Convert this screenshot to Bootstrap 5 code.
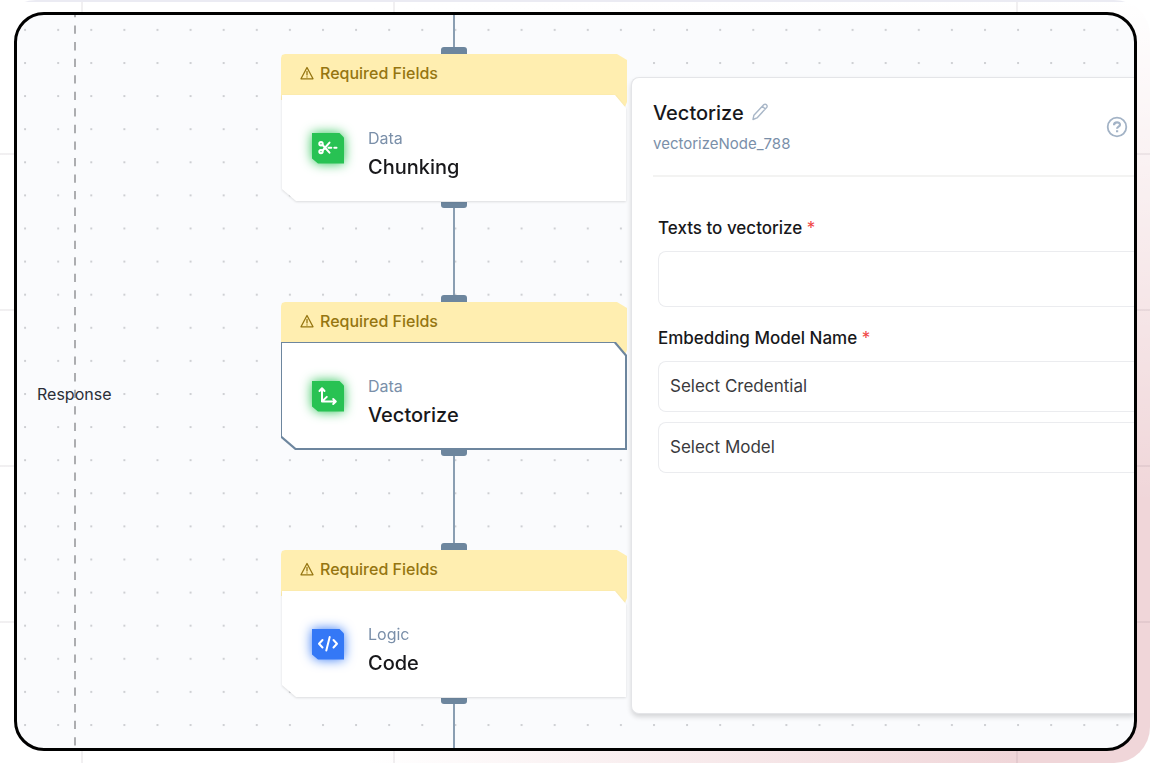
<!DOCTYPE html>
<html lang="en">
<head>
<meta charset="utf-8">
<meta name="viewport" content="width=device-width, initial-scale=1">
<title>Workflow editor</title>
<link href="https://cdn.jsdelivr.net/npm/bootstrap@5.3.0/dist/css/bootstrap.min.css" rel="stylesheet">
<style>
  body { font-family: Inter, "Liberation Sans", sans-serif; color: #18181b; background: #fff; }
  .backdrop {
    padding: 12px 14px 13px;
    position: relative;
    isolation: isolate;
  }
  .backdrop::before {
    content: ""; position: absolute; inset: 0 1px 1px 0; z-index: -2; border-radius: 36px;
    background:
      linear-gradient(#ebebf3 0 0) 0 0 / 100% 2px no-repeat,
      linear-gradient(to bottom, #fff 0, rgba(255,255,255,0) 66%),
      linear-gradient(to right, #fff 32%, #f0d6d9 88%);
  }
  .backdrop::after {
    content: ""; position: absolute; inset: 2px 1px 1px 0; z-index: -1;
    background:
      linear-gradient(rgba(60,40,60,.07) 0 0) 81px 0 / 2px 100% no-repeat,
      linear-gradient(rgba(60,40,60,.07) 0 0) 393px 0 / 2px 100% no-repeat,
      linear-gradient(rgba(60,40,60,.07) 0 0) 1016px 0 / 2px 100% no-repeat,
      linear-gradient(rgba(60,40,60,.07) 0 0) 0 151px / 100% 2px no-repeat,
      linear-gradient(rgba(60,40,60,.07) 0 0) 0 307px / 100% 2px no-repeat,
      linear-gradient(rgba(60,40,60,.07) 0 0) 0 463px / 100% 2px no-repeat,
      linear-gradient(rgba(60,40,60,.07) 0 0) 0 619px / 100% 2px no-repeat;
  }
  .editor { border: 3px solid #000; border-radius: 30px; background: #fafbfd; overflow: hidden; }
  .editor-grid { inset: 0; z-index: 0; }
  .lane { width: 264px; flex: none; z-index: 1; }
  .lane-label { margin-left: 20px; margin-top: 24px; font-size: 16px; line-height: 24px; color: #2b2f38; }
  .flow { width: 346px; flex: none; z-index: 1; }
  .wire { width: 2px; background: #8a9eb2; }
  .wire-in { height: 32px; }
  .wire-mid { height: 87px; }
  .port { width: 26px; height: 7px; background: #6d869e; }
  .port-in { border-radius: 3px 3px 0 0; }
  .port-out { border-radius: 0 0 3px 3px; height: 6px; }
  .node { position: relative; isolation: isolate; width: 100%; }
  .node::before {
    content: ""; position: absolute; inset: 0 0 auto 0; height: 53px; z-index: -1; background: #ffeeb0;
    clip-path: polygon(0 4px, 1px 1px, 4px 0, 336px 0, 100% 6px, 100% 48px, 344px 100%, 330px 46px, 0 46px);
  }
  .notice { height: 40px; padding: 0 19px 2px; gap: 6px; font-size: 16px; font-weight: 500; color: #957510; }
  .node-card { position: relative; isolation: isolate; height: 108px; padding-left: 31px; gap: 24px; filter: drop-shadow(0 1px 1px rgba(0,0,0,.12)); }
  .node-card::before, .node-card::after {
    content: ""; position: absolute; z-index: -1;
    clip-path: polygon(0 0, calc(100% - 11px) 0, 100% 13px, 100% 100%, 14px 100%, 0 calc(100% - 12px));
  }
  .node-card::before { display: none; inset: 0; background: #6d869e; }
  .node-card::after { inset: 1px 1px 1px 1px; background: #fff; }
  .node-card.chosen { filter: none; }
  .node-card.chosen::before { display: block; }
  .node-card.chosen::after { inset: 1px 2px 2px 1px; }
  .glow { filter: drop-shadow(0 0 6px var(--tint)); }
  .glow-box { width: 32px; height: 31px; background: var(--tint); clip-path: polygon(0 0, 27px 0, 100% 5px, 100% 100%, 6px 100%, 0 26px); }
  .tint-green { --tint: #28c253; }
  .tint-blue { --tint: #3478f6; }
  .node-text { padding-top: 11px; }
  .node-kind { font-size: 16px; line-height: 24px; color: #7a8fa9; }
  .node-name { font-size: 20px; line-height: 30px; font-weight: 500; margin: 2px 0 0; }
  .inspector { margin: 62px 0 34px 4px; background: #fff; border: 1px solid #e4e5e8; border-right: 0; border-radius: 8px 0 0 8px; box-shadow: 0 3px 5px rgba(0,0,0,.15); z-index: 2; }
  .inspector-head { margin-left: 21px; padding: 20px 6px 18px 0; border-bottom: 2px solid #f3f3f2; }
  .inspector-head h1 { font-size: 20px; line-height: 30px; font-weight: 500; margin: 0; }
  .node-id { font-size: 15px; line-height: 24px; color: #7a8fa9; margin: 4px 0 1px; }
  .plain-btn { border: 0; background: none; padding: 0; line-height: 0; }
  .fields { padding: 38px 0 0 26px; }
  .fields label { display: block; font-size: 17px; line-height: 26px; font-weight: 500; margin-bottom: 10px; }
  .fields .star { color: #f04444; font-weight: 400; }
  .field-box { border: 1px solid #ebecef; border-right: 0; border-radius: 8px 0 0 8px; background: #fff none; font-size: 17px; height: 51px; padding: 0 11px; color: #3a3a3d; }
  .field-tall { height: 56px; margin-bottom: 18px; }
  .field-stack { gap: 10px; }
</style>
</head>
<body>
<div class="backdrop min-vh-100 d-flex">
  <main class="editor position-relative flex-grow-1 d-flex">
    <svg class="editor-grid position-absolute w-100 h-100" aria-hidden="true">
      <defs>
        <pattern id="dots" x="-8.5" y="-1.7" width="33.1" height="33.1" patternUnits="userSpaceOnUse">
          <circle cx="16.6" cy="16.6" r="1.1" fill="#c6c8cc"/>
        </pattern>
      </defs>
      <rect width="100%" height="100%" fill="url(#dots)"/>
      <line x1="58" y1="-6" x2="58" y2="100%" stroke="#acadb0" stroke-width="2" stroke-dasharray="8.3 8.25"/>
    </svg>

    <section class="lane position-relative d-flex align-items-center">
      <span class="lane-label">Response</span>
    </section>

    <section class="flow position-relative d-flex flex-column align-items-center">
      <div class="wire wire-in"></div>
      <div class="port port-in"></div>
      <article class="node">
        <div class="notice d-flex align-items-center">
          <svg width="14" height="14" viewBox="0 0 14 14" fill="none" stroke="currentColor" stroke-width="1.3" stroke-linejoin="round" stroke-linecap="round"><path d="M7 1.5 13 12.8H1zM7 5.5v3.4M7 10.8v.2"/></svg>
          <span>Required Fields</span>
        </div>
        <div class="node-card d-flex align-items-center">
          <div class="glow tint-green"><div class="glow-box d-flex align-items-center justify-content-center">
            <svg width="22" height="22" viewBox="0 0 22 22" fill="none" stroke="#fff" stroke-width="2" stroke-linecap="round"><circle cx="4" cy="6.8" r="1.7"/><circle cx="4" cy="14.6" r="1.7"/><path d="M5.6 8 12.5 15.7M5.6 13.5 12.5 5.6M11.5 10.7h2.8M17.3 10.7h2.2"/></svg>
          </div></div>
          <div class="node-text"><div class="node-kind">Data</div><h2 class="node-name">Chunking</h2></div>
        </div>
      </article>
      <div class="port port-out"></div>
      <div class="wire wire-mid"></div>
      <div class="port port-in"></div>
      <article class="node">
        <div class="notice d-flex align-items-center">
          <svg width="14" height="14" viewBox="0 0 14 14" fill="none" stroke="currentColor" stroke-width="1.3" stroke-linejoin="round" stroke-linecap="round"><path d="M7 1.5 13 12.8H1zM7 5.5v3.4M7 10.8v.2"/></svg>
          <span>Required Fields</span>
        </div>
        <div class="node-card chosen d-flex align-items-center">
          <div class="glow tint-green"><div class="glow-box d-flex align-items-center justify-content-center">
            <svg width="22" height="22" viewBox="0 0 22 22" fill="none" stroke="#fff" stroke-width="2" stroke-linecap="round" stroke-linejoin="round"><path d="M5 4v12.500h13.500M2.500 6 5 3.300 7.500 6M16.200 14l2.600 2.500-2.600 2.500M5 16.500l4.800-4.600"/></svg>
          </div></div>
          <div class="node-text"><div class="node-kind">Data</div><h2 class="node-name">Vectorize</h2></div>
        </div>
      </article>
      <div class="port port-out"></div>
      <div class="wire wire-mid"></div>
      <div class="port port-in"></div>
      <article class="node">
        <div class="notice d-flex align-items-center">
          <svg width="14" height="14" viewBox="0 0 14 14" fill="none" stroke="currentColor" stroke-width="1.3" stroke-linejoin="round" stroke-linecap="round"><path d="M7 1.5 13 12.8H1zM7 5.5v3.4M7 10.8v.2"/></svg>
          <span>Required Fields</span>
        </div>
        <div class="node-card d-flex align-items-center">
          <div class="glow tint-blue"><div class="glow-box d-flex align-items-center justify-content-center">
            <svg width="22" height="22" viewBox="0 0 22 22" fill="none" stroke="#fff" stroke-width="2" stroke-linecap="round" stroke-linejoin="round"><path d="M5.500 7 2 10.700l3.500 3.800M16.500 7l3.500 3.700-3.500 3.800M12.700 4 9.300 17.500"/></svg>
          </div></div>
          <div class="node-text"><div class="node-kind">Logic</div><h2 class="node-name">Code</h2></div>
        </div>
      </article>
      <div class="port port-out"></div>
      <div class="wire flex-grow-1"></div>
    </section>

    <aside class="inspector position-relative flex-grow-1">
      <header class="inspector-head d-flex justify-content-between align-items-start">
        <div>
          <div class="d-flex align-items-center gap-2">
            <h1>Vectorize</h1>
            <button type="button" class="plain-btn" aria-label="Rename">
              <svg width="16" height="20" viewBox="0 0 16 20" fill="none" stroke="#a9b7c8" stroke-width="1.400" stroke-linejoin="round"><path d="M1 16.500l.9-4.300L11.700 1.800a1.900 1.900 0 0 1 2.800 0l.1.100a1.900 1.900 0 0 1 0 2.700L5 14.900zM10.300 3.300l3 2.800"/></svg>
            </button>
          </div>
          <p class="node-id">vectorizeNode_788</p>
        </div>
        <button type="button" class="plain-btn mt-3" aria-label="Help">
          <svg width="22" height="26" viewBox="0 0 22 26" fill="none" stroke="#a3b3c6" stroke-width="1.800"><circle cx="11" cy="13" r="9.300"/><path stroke-width="2.200" d="M8 11.200c0-3.800 6-3.600 6-.5 0 2-2.900 1.900-2.900 4"/><path stroke-width="2.200" d="M11.100 16.200v2"/></svg>
        </button>
      </header>
      <form class="fields">
        <label for="texts">Texts to vectorize <span class="star">*</span></label>
        <input id="texts" type="text" class="field-box field-tall d-block w-100">
        <label for="credential">Embedding Model Name <span class="star">*</span></label>
        <div class="field-stack d-grid">
          <select id="credential" class="form-select field-box"><option>Select Credential</option></select>
          <select id="model" class="form-select field-box" aria-label="Model"><option>Select Model</option></select>
        </div>
      </form>
    </aside>
  </main>
</div>
<script src="https://cdn.jsdelivr.net/npm/bootstrap@5.3.0/dist/js/bootstrap.bundle.min.js"></script>
</body>
</html>
